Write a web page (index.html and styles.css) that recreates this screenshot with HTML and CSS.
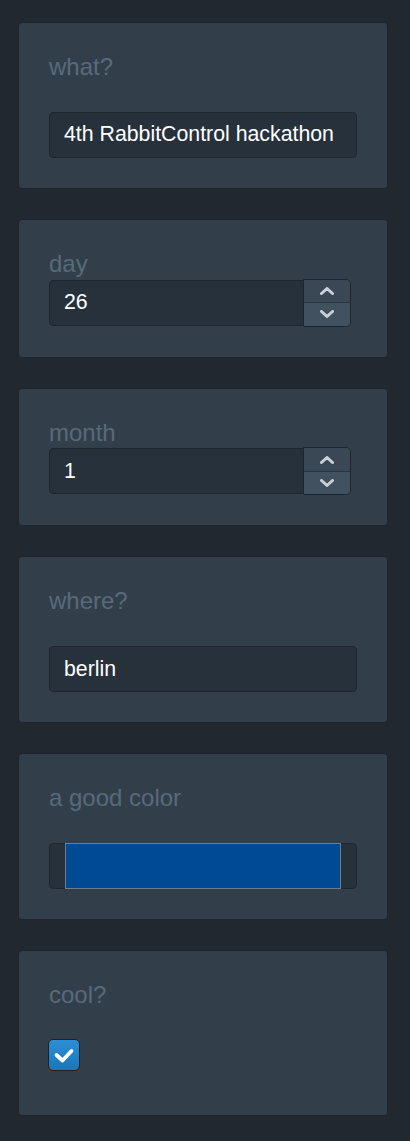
FILE: index.html
```html
<!DOCTYPE html>
<html>
<head>
<meta charset="utf-8">
<link rel="stylesheet" href="styles.css">
</head>
<body>
<div class="list">
  <div class="card">
    <div class="label">what?</div>
    <input class="field text-field" type="text" value="4th RabbitControl hackathon">
  </div>
  <div class="card">
    <div class="label">day</div>
    <div class="number">
      <input class="field num-field" type="text" value="26">
      <div class="spinner">
        <div class="spin up"><svg viewBox="0 0 14 8" width="14" height="8"><polyline points="1.5,6.5 7,1.5 12.5,6.5"/></svg></div>
        <div class="spin down"><svg viewBox="0 0 14 8" width="14" height="8"><polyline points="1.5,1.5 7,6.5 12.5,1.5"/></svg></div>
      </div>
    </div>
  </div>
  <div class="card">
    <div class="label">month</div>
    <div class="number">
      <input class="field num-field" type="text" value="1">
      <div class="spinner">
        <div class="spin up"><svg viewBox="0 0 14 8" width="14" height="8"><polyline points="1.5,6.5 7,1.5 12.5,6.5"/></svg></div>
        <div class="spin down"><svg viewBox="0 0 14 8" width="14" height="8"><polyline points="1.5,1.5 7,6.5 12.5,1.5"/></svg></div>
      </div>
    </div>
  </div>
  <div class="card">
    <div class="label">where?</div>
    <input class="field text-field" type="text" value="berlin">
  </div>
  <div class="card">
    <div class="label">a good color</div>
    <div class="field color-field"><div class="swatch"></div></div>
  </div>
  <div class="card">
    <div class="label">cool?</div>
    <div class="check-row">
      <div class="checkbox"><svg viewBox="0 0 32 32" width="32" height="32"><polyline points="8.5,16 14.5,21.5 23.5,12"/></svg></div>
    </div>
  </div>
</div>
</body>
</html>
```

FILE: styles.css
```css
html, body {
  margin: 0;
  padding: 0;
  background: #22282f;
}
body {
  font-family: "Liberation Sans", Arial, sans-serif;
}
.list {
  display: flex;
  flex-direction: column;
  gap: 30px;
  padding: 22px 22px 22px 18px;
}
.card {
  background: #323f4b;
  border: 1px solid #1e252c;
  border-radius: 4px;
  padding: 30px;
  display: flex;
  flex-direction: column;
}
.label {
  font-size: 24px;
  line-height: 28.8px;
  color: #586a7a;
  height: 28.8px;
}
.field {
  box-sizing: border-box;
  height: 46px;
  background: #27313b;
  border: 1px solid #1f272e;
  border-radius: 4px;
  color: #ffffff;
  font-family: "Liberation Sans", Arial, sans-serif;
  font-size: 21.3px;
  padding: 0 0 0 14px;
  margin: 0;
  outline: none;
  -webkit-appearance: none;
  appearance: none;
}
.text-field {
  width: 308px;
  margin-top: 30px;
}
.number {
  display: flex;
  align-items: center;
  height: 48px;
}
.num-field {
  width: 255px;
  border-radius: 4px 0 0 4px;
}
.spinner {
  box-sizing: border-box;
  width: 48px;
  height: 48px;
  margin-left: -1px;
  border: 1px solid #1e252c;
  border-radius: 0 5px 5px 0;
  overflow: hidden;
  display: flex;
  flex-direction: column;
}
.spin {
  flex: 1;
  display: flex;
  align-items: center;
  justify-content: center;
}
.spin.up {
  background: #3a4856;
  border-bottom: 1px solid #2a343e;
}
.spin.down {
  background: #425160;
}
.spin svg polyline {
  fill: none;
  stroke: #c8d0d8;
  stroke-width: 3;
  stroke-linecap: round;
  stroke-linejoin: round;
}
.color-field {
  width: 308px;
  margin-top: 30px;
  padding: 0 15px;
  display: flex;
}
.swatch {
  flex: 1;
  box-sizing: border-box;
  margin: -1px 0;
  background: #004a94;
  border: 1px solid #6c7c8c;
}
.check-row {
  margin-top: 29.2px;
  height: 46px;
  display: flex;
  align-items: flex-start;
}
.checkbox {
  box-sizing: border-box;
  width: 32px;
  height: 32px;
  border: 1px solid #1b2228;
  border-radius: 5px;
  background: linear-gradient(#2d8ed5, #1677bd);
  display: flex;
  align-items: center;
  justify-content: center;
  margin-left: -1px;
}
.checkbox svg {
  margin: -1px;
}
.checkbox svg polyline {
  fill: none;
  stroke: #ffffff;
  stroke-width: 3.8;
  stroke-linecap: round;
  stroke-linejoin: round;
}
```
